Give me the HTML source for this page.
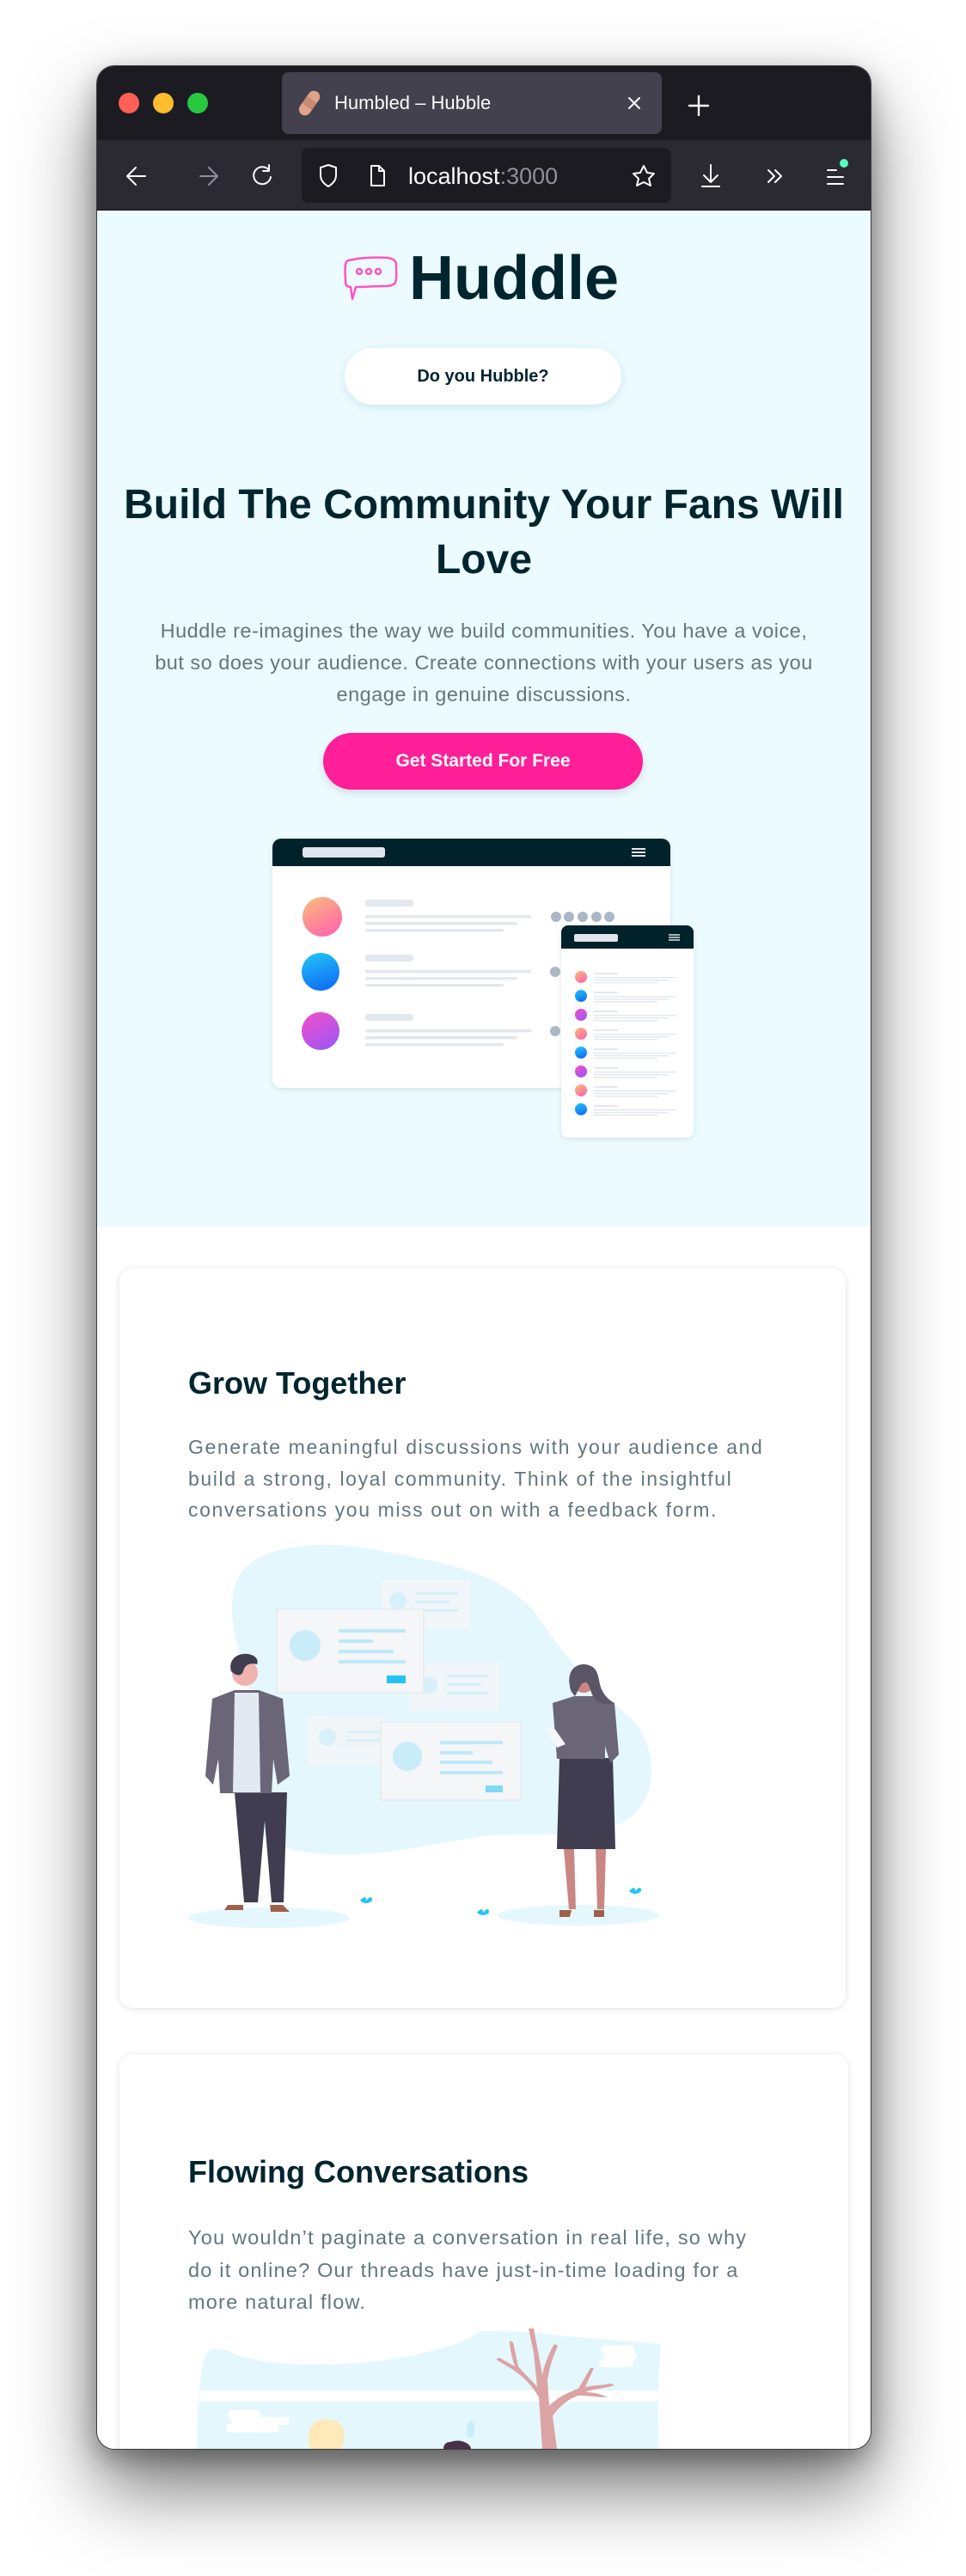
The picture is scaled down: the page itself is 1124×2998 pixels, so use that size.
<!DOCTYPE html>
<html><head><meta charset="utf-8"><style>
*{margin:0;padding:0;box-sizing:border-box}
html,body{width:1124px;height:2998px;background:#fff;overflow:hidden;font-family:"Liberation Sans",sans-serif}
#win{position:absolute;left:113px;top:77px;width:900px;height:2773px;border-radius:20px;overflow:hidden;background:#fff;box-shadow:0 0 0 1px #3a3a3a,0 45px 90px rgba(0,0,0,.55),0 10px 30px rgba(0,0,0,.3)}
.abs{position:absolute}
.nw{white-space:nowrap}
</style></head><body>
<div id="win">
 <div class="abs" style="left:0;top:0;width:900px;height:86px;background:#1c1b22"></div>
 <div class="abs" style="left:0;top:86px;width:900px;height:81px;background:#2b2a33"></div>
 <div class="abs" style="left:0;top:167px;width:900px;height:1px;background:#0c0c0d"></div>
 <div class="abs" style="left:0;top:168px;width:900px;height:1182px;background:#ebfbff"></div>
 <div class="abs" style="left:25px;top:31px;width:24px;height:24px;border-radius:50%;background:#ff5f57"></div>
 <div class="abs" style="left:65px;top:31px;width:24px;height:24px;border-radius:50%;background:#febc2e"></div>
 <div class="abs" style="left:105px;top:31px;width:24px;height:24px;border-radius:50%;background:#28c840"></div>
 <div class="abs" style="left:215px;top:7px;width:442px;height:72px;border-radius:8px;background:#42414d"></div>
 <div class="abs nw" style="left:276px;top:30px;font-size:22px;line-height:26px;color:#fbfbfe">Humbled – Hubble</div>
 <div class="abs" style="left:238px;top:95px;width:430px;height:64px;border-radius:8px;background:#1c1b22"></div>
 <div class="abs nw" style="left:362px;top:112px;font-size:27px;line-height:32px;color:#fbfbfe">localhost<span style="color:#8f8f9d">:3000</span></div>

 <svg class="abs" style="left:0;top:0" width="900" height="2773" viewBox="0 0 900 2773">
  <defs>
   <linearGradient id="g1" x1="0" y1="0" x2=".6" y2="1"><stop offset="0" stop-color="#fbbf77"/><stop offset="1" stop-color="#ff6aa9"/></linearGradient>
   <linearGradient id="g2" x1="0" y1="0" x2=".3" y2="1"><stop offset="0" stop-color="#22c6f5"/><stop offset="1" stop-color="#1174f6"/></linearGradient>
   <linearGradient id="g3" x1="0" y1="0" x2=".6" y2="1"><stop offset="0" stop-color="#f64fc6"/><stop offset="1" stop-color="#a456f2"/></linearGradient>
   <filter id="sh" x="-10%" y="-10%" width="120%" height="130%"><feDropShadow dx="0" dy="2" stdDeviation="3" flood-color="#6a8a99" flood-opacity=".2"/></filter>
   <g id="prow"><rect x="578" y="-5" width="28" height="2" fill="#e3e8ee"/><rect x="578" y="0" width="96" height="1.5" fill="#e3e8ee"/><rect x="578" y="3" width="87" height="1.5" fill="#e3e8ee"/><rect x="578" y="6" width="74" height="1.5" fill="#e3e8ee"/></g>
  </defs>
  <g transform="translate(247,43) rotate(-55)"><rect x="-16" y="-7" width="32" height="14" rx="7" fill="#e0a28a"/><rect x="-5" y="-7" width="10" height="14" fill="#c98a72"/></g>
  <g stroke="#fbfbfe" stroke-width="2" fill="none" stroke-linecap="round" stroke-linejoin="round">
   <path d="M619 37l12 12M631 37l-12 12"/>
   <path d="M700 35v22M689 46h22" stroke-width="2.4"/>
   <path d="M56 128H36M45 118l-10 10 10 10"/>
   <path d="M140 128h-20M130 118l10 10-10 10" stroke="#8f8f9d"/>
   <path d="M200 121a10 10 0 1 0 2 8M200 115v7h-7"/>
   <path d="M269 115l9 3v9c0 6-4 10-9 13-5-3-9-7-9-13v-9z"/>
   <path d="M319 116h9l6 6v17h-15z M328 116v6h6"/>
   <path d="M636 116l4 8 8 1-6 6 2 8-8-4-8 4 2-8-6-6 8-1z"/>
   <path d="M714 115v20M706 127l8 8 8-8M704 140h20"/>
   <path d="M781 121l7 7-7 7M789 121l7 7-7 7"/>
   <path d="M850 121h10M850 129h18M850 137h18"/>
  </g>
  <circle cx="869" cy="113" r="5" fill="#54ffbd"/>
  <!-- logo bubble -->
  <g fill="none" stroke="#ff52c1" stroke-width="2.5" stroke-linejoin="round" transform="translate(114,-3)">
   <path d="M179 229c12-3 30-4 45-3 6 1 10 3 10 8 0 8 1 15-1 21-2 3-6 4-12 4-12 0-22 1-34 1l-4 14 -2-14c-4 0-6-2-6-6 0-8-1-14 0-20 0-3 2-5 4-5z"/>
   <circle cx="191" cy="242" r="3"/><circle cx="202" cy="242" r="3"/><circle cx="213" cy="242" r="3"/>
  </g>
  <!-- hero mockup -->
  <g filter="url(#sh)"><rect x="204" y="899" width="463" height="290" rx="10" fill="#fff"/></g>
  <path d="M214 899h443a10 10 0 0 1 10 10v22H204v-22a10 10 0 0 1 10-10z" fill="#00222b"/>
  <rect x="239" y="909" width="96" height="12" rx="3" fill="#e0e6ed"/>
  <g stroke="#e0e6ed" stroke-width="2"><path d="M622 911h16M622 915h16M622 919h16"/></g>
  <g fill="#e3e8ee">
   <rect x="312" y="970" width="56" height="8" rx="3"/><rect x="312" y="988" width="193" height="3.5" rx="1.5"/><rect x="312" y="996" width="177" height="3.5" rx="1.5"/><rect x="312" y="1004" width="161" height="3.5" rx="1.5"/>
   <rect x="312" y="1034" width="56" height="8" rx="3"/><rect x="312" y="1052" width="193" height="3.5" rx="1.5"/><rect x="312" y="1060" width="177" height="3.5" rx="1.5"/><rect x="312" y="1068" width="161" height="3.5" rx="1.5"/>
   <rect x="312" y="1103" width="56" height="8" rx="3"/><rect x="312" y="1121" width="193" height="3.5" rx="1.5"/><rect x="312" y="1129" width="177" height="3.5" rx="1.5"/><rect x="312" y="1137" width="161" height="3.5" rx="1.5"/>
  </g>
  <circle cx="262" cy="990" r="23" fill="url(#g1)"/><circle cx="260" cy="1054" r="22" fill="url(#g2)"/><circle cx="260" cy="1123" r="22" fill="url(#g3)"/>
  <g fill="#a9b8c4"><circle cx="534" cy="990" r="6"/><circle cx="549" cy="990" r="6"/><circle cx="565" cy="990" r="6"/><circle cx="581" cy="990" r="6"/><circle cx="596" cy="990" r="6"/><circle cx="533" cy="1054" r="6"/><circle cx="533" cy="1123" r="6"/></g>
  <g filter="url(#sh)"><rect x="540" y="1000" width="154" height="247" rx="8" fill="#fff"/></g>
  <path d="M548 1000h138a8 8 0 0 1 8 8v19H540v-19a8 8 0 0 1 8-8z" fill="#00222b"/>
  <rect x="555" y="1010" width="51" height="9" rx="2" fill="#e0e6ed"/>
  <g stroke="#e0e6ed" stroke-width="1.5"><path d="M665 1011h13M665 1014h13M665 1017h13"/></g>
  <g transform="translate(0,1060)"><circle cx="563" cy="0" r="7" fill="url(#g1)"/><use href="#prow"/></g>
  <g transform="translate(0,1082)"><circle cx="563" cy="0" r="7" fill="url(#g2)"/><use href="#prow"/></g>
  <g transform="translate(0,1104)"><circle cx="563" cy="0" r="7" fill="url(#g3)"/><use href="#prow"/></g>
  <g transform="translate(0,1126)"><circle cx="563" cy="0" r="7" fill="url(#g1)"/><use href="#prow"/></g>
  <g transform="translate(0,1148)"><circle cx="563" cy="0" r="7" fill="url(#g2)"/><use href="#prow"/></g>
  <g transform="translate(0,1170)"><circle cx="563" cy="0" r="7" fill="url(#g3)"/><use href="#prow"/></g>
  <g transform="translate(0,1192)"><circle cx="563" cy="0" r="7" fill="url(#g1)"/><use href="#prow"/></g>
  <g transform="translate(0,1214)"><circle cx="563" cy="0" r="7" fill="url(#g2)"/><use href="#prow"/></g>
 </svg>

 <div class="abs nw" style="left:363px;top:214px;font-size:72px;line-height:66px;font-weight:bold;color:#00252e">Huddle</div>
 <div class="abs" style="left:288px;top:328px;width:322px;height:66px;border-radius:33px;background:#fff;box-shadow:0 3px 10px rgba(0,80,100,.12);text-align:center;line-height:66px;font-size:20px;font-weight:bold;color:#00252e">Do you Hubble?</div>
 <div class="abs nw" style="left:0;width:900px;top:479px;text-align:center;font-size:48px;line-height:64px;font-weight:bold;color:#00252e">Build The Community Your Fans Will<br>Love</div>
 <div class="abs nw" style="left:0;width:900px;top:639px;text-align:center;font-size:23.5px;line-height:37px;color:#62777d;letter-spacing:.5px">Huddle re-imagines the way we build communities. You have a voice,<br>but so does your audience. Create connections with your users as you<br>engage in genuine discussions.</div>
 <div class="abs" style="left:263px;top:776px;width:372px;height:66px;border-radius:33px;background:#ff1f98;box-shadow:0 4px 10px rgba(0,0,0,.12);text-align:center;line-height:66px;font-size:21px;font-weight:bold;color:#fff">Get Started For Free</div>

 <div class="abs" style="left:26px;top:1399px;width:845px;height:861px;border-radius:16px;background:#fff;box-shadow:0 1px 8px rgba(0,0,0,.12)"></div>
 <div class="abs nw" style="left:106px;top:1511px;font-size:36px;line-height:44px;font-weight:bold;color:#00252e">Grow Together</div>
 <div class="abs nw" style="left:106px;top:1589px;font-size:23px;line-height:36.5px;color:#62777d;letter-spacing:1.6px">Generate meaningful discussions with your audience and<br>build a strong, loyal community. Think of the insightful<br>conversations you miss out on with a feedback form.</div>
 <div class="abs" style="left:26px;top:2314px;width:848px;height:700px;border-radius:16px;background:#fff;box-shadow:0 1px 8px rgba(0,0,0,.12)"></div>
 <div class="abs nw" style="left:106px;top:2429px;font-size:36px;line-height:44px;font-weight:bold;color:#00252e">Flowing Conversations</div>
 <div class="abs nw" style="left:106px;top:2509px;font-size:23.5px;line-height:37.5px;color:#62777d;letter-spacing:1.2px">You wouldn’t paginate a conversation in real life, so why<br>do it online? Our threads have just-in-time loading for a<br>more natural flow.</div>

 <svg class="abs" style="left:0;top:0" width="900" height="2773" viewBox="0 0 900 2773">
  <path d="M175 1745c30-25 90-30 150-18 80 15 150 25 190 80 30 45 60 80 100 110 40 35 40 100 0 125-50 25-120 10-180 20-80 15-160 30-220 10-40-15-40-80-30-130 10-40-60-150-10-197z" fill="#e4f7fd"/>
  <g fill="#f3f5f7" opacity=".8"><rect x="331" y="1762" width="102" height="57"/><rect x="364" y="1858" width="104" height="56"/><rect x="245" y="1920" width="91" height="57"/></g>
  <g fill="#cdeefb" opacity=".7"><circle cx="350" cy="1786" r="10"/><rect x="370" y="1776" width="50" height="3"/><rect x="370" y="1786" width="40" height="3"/><rect x="370" y="1796" width="50" height="3"/><circle cx="386" cy="1884" r="10"/><rect x="407" y="1872" width="48" height="3"/><rect x="407" y="1882" width="40" height="3"/><rect x="407" y="1892" width="48" height="3"/><circle cx="268" cy="1945" r="10"/><rect x="290" y="1937" width="40" height="3"/><rect x="290" y="1947" width="40" height="3"/></g>
  <rect x="209" y="1796" width="171" height="97" fill="#f4f6f8" stroke="#dfe5ea"/>
  <circle cx="242" cy="1838" r="18" fill="#c8ecf8"/>
  <g fill="#bde9f9"><rect x="281" y="1819" width="78" height="4"/><rect x="281" y="1831" width="40" height="4"/><rect x="281" y="1843" width="64" height="4"/><rect x="281" y="1855" width="78" height="4"/></g>
  <rect x="337" y="1873" width="22" height="9" fill="#22c4f5"/>
  <rect x="330" y="1927" width="163" height="91" fill="#f4f6f8" stroke="#dfe5ea"/>
  <circle cx="361" cy="1967" r="17" fill="#c8ecf8"/>
  <g fill="#bde9f9"><rect x="399" y="1949" width="73" height="4"/><rect x="399" y="1961" width="38" height="4"/><rect x="399" y="1972" width="61" height="4"/><rect x="399" y="1984" width="73" height="4"/></g>
  <rect x="452" y="2001" width="20" height="8" fill="#7fd8f5"/>
  <ellipse cx="200" cy="2155" rx="94" ry="12" fill="#e4f7fd"/>
  <ellipse cx="560" cy="2152" rx="94" ry="12" fill="#e4f7fd"/>
  <g fill="#22c4f5"><path d="M306 2135q7-8 7 0q7-8 7 0q-7 6-14 0z"/><path d="M442 2149q7-8 7 0q7-8 7 0q-7 6-14 0z"/><path d="M619 2124q7-8 7 0q7-8 7 0q-7 6-14 0z"/></g>
  <path d="M160 2009h61l-4 128h-14l-8-95-8 95h-16z" fill="#3f3d4f"/>
  <path d="M152 2140h18v6h-22zM201 2140h15l8 8h-22z" fill="#a0614a"/>
  <path d="M134 1900l26-10h28l28 10 8 90-14 10-5-30-2 40h-60l-2-40-6 30-9-10z" fill="#6a6577"/>
  <path d="M160 1893h28l2 116h-32z" fill="#e3e9f0"/>
  <circle cx="172" cy="1870" r="15" fill="#efb3b0"/>
  <path d="M156 1868c-4-14 8-22 20-20 10 2 12 8 10 12-8-2-14 0-16 8-2 6-8 6-14 0z" fill="#3f3d4f"/>
  <path d="M543 2075h12l2 70h-8zM580 2075h12l-2 70h-8z" fill="#c98683"/>
  <path d="M538 2146h14l-2 8h-12zM578 2146h12v8h-12z" fill="#a0614a"/>
  <path d="M538 1969h62l3 106h-68z" fill="#3f3d4f"/>
  <path d="M530 1905l25-8h25l22 8 5 60-10 10-6-20v15h-56z" fill="#6a6577"/>
  <path d="M521 1932l14 25 10-4-14-20z" fill="#f4f6f8"/>
  <circle cx="566" cy="1880" r="13" fill="#c98683"/>
  <path d="M550 1885c-4-20 10-28 22-24 14 4 10 20 16 30 4 8 10 12 14 14-10 4-22 0-26-10-4-10-4-14-8-14-6 0-8 10-12 16-4-4-6-8-6-12z" fill="#5a5567"/>
  <path d="M116 2773c0-40 2-80 10-110 8-10 20-8 40 2 40 12 100 12 160 6 60-8 100-20 120-35 30 0 60 0 90 5l120 10c-4 40-4 80-2 122z" fill="#e4f7fd"/>
  <path d="M120 2705h540v13H118z" fill="#fff"/>
  <g fill="#fff"><rect x="152" y="2728" width="38" height="9" rx="4"/><rect x="156" y="2736" width="68" height="9" rx="4"/><rect x="150" y="2744" width="62" height="10" rx="4"/><rect x="586" y="2653" width="40" height="9" rx="4"/><rect x="590" y="2661" width="38" height="9" rx="4"/><rect x="584" y="2669" width="40" height="9" rx="4"/></g>
  <path d="M518 2773l-4-60c-8-14-18-24-30-32l-20-12 4-2 18 10c-4-12-6-22-6-30l4 2 6 28c6 8 16 16 22 24l-4-40-6-28h6l6 32 4 22c2-10 6-22 14-36l4 2c-6 14-10 26-12 40l2 30c10-10 22-16 34-20l14-24h4l-10 22c10-2 20-2 30-4l4 2c-12 4-24 4-34 8 8 0 18 2 26 6-10 0-24-2-34-2-12 4-24 14-30 24l8 60z" fill="#dba3a3"/>
  <path d="M248 2773c-4-12-2-24 4-30 8-6 20-6 30 0 6 6 8 16 2 30z" fill="#fde9b9"/>
  <path d="M403 2773c0-6 4-8 8-8 6-2 12-2 16 0 6 2 8 6 8 8z" fill="#4a2f4a"/>
  <path d="M431 2760c-2-10 0-18 4-20 4 2 6 10 2 20z" fill="#c8eef8"/>
 </svg>
</div>
</body></html>
